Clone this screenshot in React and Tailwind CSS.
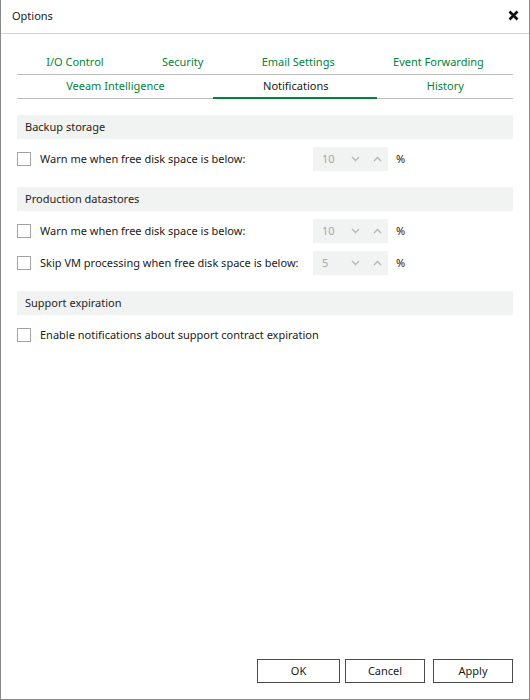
import React from "react";

const font = { fontFamily: '"Noto Sans", "Open Sans", sans-serif' };

function Chevron({ up }) {
  return (
    <svg width="9" height="6" viewBox="0 0 9 6" className="block">
      <path
        d={up ? "M1 5 L4.5 1.5 L8 5" : "M1 1 L4.5 4.5 L8 1"}
        fill="none"
        stroke="#b4b4b4"
        strokeWidth="1.3"
      />
    </svg>
  );
}

function Checkbox() {
  return <div className="w-[14px] h-[14px] border border-[#a3a3a3] bg-white shrink-0" />;
}

function Spinner({ value }) {
  return (
    <div className="flex items-center w-[75px] h-[24px] bg-[#f1f2f2] text-[#a8a8a8]">
      <span className="pl-[9px] w-[31px]">{value}</span>
      <span className="w-[22px] flex justify-center"><Chevron /></span>
      <span className="w-[22px] flex justify-center"><Chevron up /></span>
    </div>
  );
}

function SpinRow({ label, value }) {
  return (
    <div className="flex items-center h-[24px]">
      <div className="flex items-center w-[296px] gap-[9px] whitespace-nowrap">
        <Checkbox />
        <span>{label}</span>
      </div>
      <Spinner value={value} />
      <span className="ml-[8px] text-[#1a1a1a]">%</span>
    </div>
  );
}

function Header({ children }) {
  return (
    <div className="h-[24px] bg-[#f1f2f2] flex items-center pl-[8px] text-[#1e1e1e]">{children}</div>
  );
}

function Tab({ children, active }) {
  return (
    <div
      className={
        "relative flex-auto text-center h-full flex items-center justify-center whitespace-nowrap " +
        (active ? "text-[#1a1a1a]" : "text-[#00843d]")
      }
    >
      <span className="-mt-[1px]">{children}</span>
      {active && <div className="absolute left-[-1px] right-[1px] bottom-[-1px] h-[2px] bg-[#00843d]" />}
    </div>
  );
}

export default function App() {
  return (
    <div
      className="w-[530px] h-[700px] bg-white border-l border-r border-b border-[#8a8a8a] flex flex-col text-[11px] text-[#1a1a1a]"
      style={font}
    >
      <div className="h-[34px] border-b border-[#d4d4d4] flex items-center justify-between pl-[11px] pr-[10px] shrink-0">
        <span>Options</span>
        <svg width="11" height="11" viewBox="0 0 11 11" className="-mt-[2px]">
          <path d="M1.5 1.5 L9.5 9.5 M9.5 1.5 L1.5 9.5" stroke="#111" strokeWidth="2.6" />
        </svg>
      </div>
      <div className="flex-1 flex flex-col px-[16px] pt-[17px] pb-[16px]">
        <div className="flex h-[24px] border-b border-[#bdbdbd]">
          <Tab>I/O Control</Tab>
          <Tab>Security</Tab>
          <Tab>Email Settings</Tab>
          <Tab>Event Forwarding</Tab>
        </div>
        <div className="flex h-[24px] border-b border-[#bdbdbd]">
          <Tab>Veeam Intelligence</Tab>
          <Tab active>Notifications</Tab>
          <Tab>History</Tab>
        </div>

        <div className="mt-[16px] flex flex-col gap-[8px]">
          <Header>Backup storage</Header>
          <SpinRow label="Warn me when free disk space is below:" value="10" />
        </div>
        <div className="mt-[16px] flex flex-col gap-[8px]">
          <Header>Production datastores</Header>
          <SpinRow label="Warn me when free disk space is below:" value="10" />
          <SpinRow label="Skip VM processing when free disk space is below:" value="5" />
        </div>
        <div className="mt-[16px] flex flex-col gap-[8px]">
          <Header>Support expiration</Header>
          <div className="flex items-center h-[24px] gap-[9px]">
            <Checkbox />
            <span>Enable notifications about support contract expiration</span>
          </div>
        </div>

        <div className="mt-auto flex justify-end">
          <button className="w-[83px] h-[24px] border border-[#4a4a4a] bg-white">OK</button>
          <button className="ml-[5px] w-[80px] h-[24px] border border-[#4a4a4a] bg-white">Cancel</button>
          <button className="ml-[8px] w-[80px] h-[24px] border border-[#4a4a4a] bg-white">Apply</button>
        </div>
      </div>
    </div>
  );
}
